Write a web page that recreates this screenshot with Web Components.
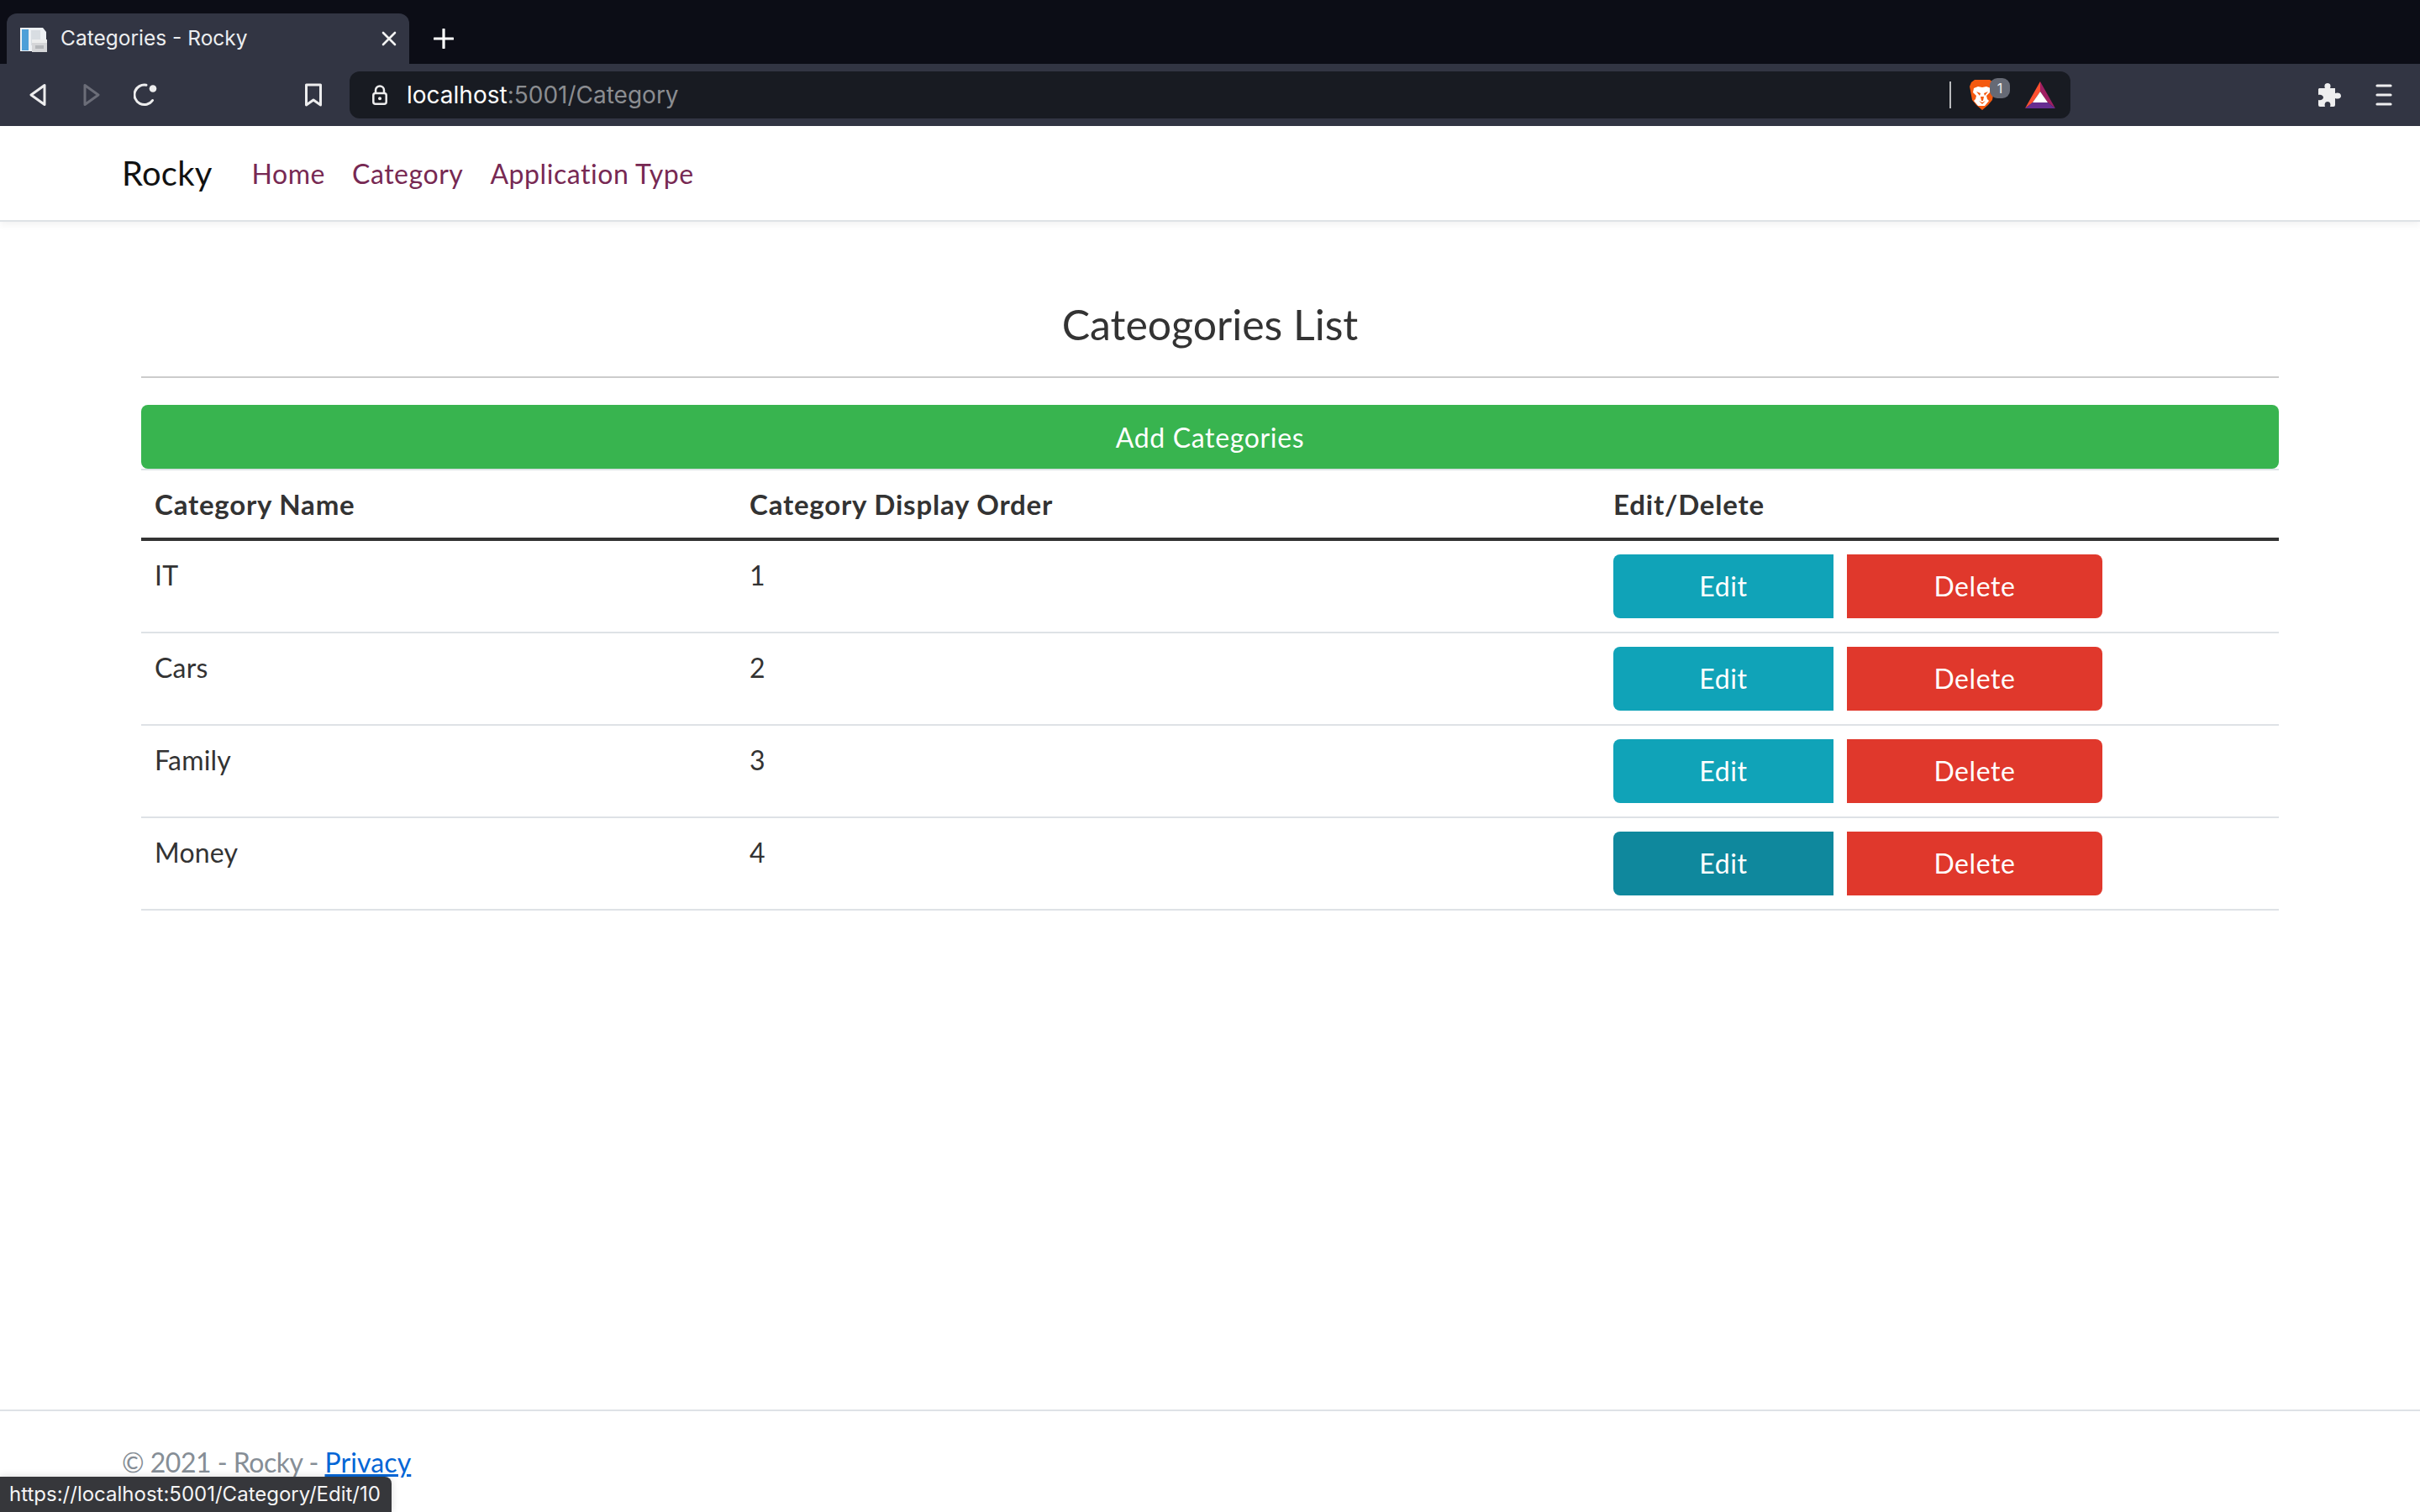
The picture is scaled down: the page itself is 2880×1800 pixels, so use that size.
<!DOCTYPE html>
<html lang="en"><head><meta charset="utf-8"><title>Categories - Rocky</title>
<style>
html,body{margin:0;padding:0;height:100%;background:#fff}
body{width:2880px;height:1800px;overflow:hidden;display:flex;flex-direction:column;position:relative;font-family:Lato,"Noto Sans",sans-serif;color:#333}
page-main{flex:1}
</style></head><body>
<browser-chrome></browser-chrome>
<site-nav></site-nav>
<page-main>
  <cat-row name="IT" order="1"></cat-row>
  <cat-row name="Cars" order="2"></cat-row>
  <cat-row name="Family" order="3"></cat-row>
  <cat-row name="Money" order="4" hover></cat-row>
</page-main>
<site-footer></site-footer>
<status-tip>https://localhost:5001/Category/Edit/10</status-tip>
<script>
function def(name,html,init){customElements.define(name,class extends HTMLElement{constructor(){super();const r=this.attachShadow({mode:'open'});r.innerHTML=typeof html==='function'?html(this):html;}connectedCallback(){if(init)init(this)}})}
const UI='Inter,"Liberation Sans",sans-serif';
def('browser-chrome',`<style>
:host{display:block;font-family:${UI}}
.strip{height:76px;background:#0c0d16;display:flex;align-items:flex-end;padding-left:8px;box-sizing:border-box}
.tab{width:479px;height:60px;background:#323543;border-radius:12px 12px 0 0;display:flex;align-items:center;box-sizing:border-box;padding:0 15px 0 16px;color:#eceef0;font-size:24.5px}
.tab svg.fav{margin-right:16px;margin-top:-1px}
.tab span{flex:1;margin-top:-2px}
.plus{margin-left:29px;margin-bottom:18px}
.bar{height:74px;background:#323543;display:flex;align-items:center;box-sizing:border-box;padding-left:35px}
.addr{width:2048px;height:56px;background:#181b22;border-radius:12px;display:flex;align-items:center;box-sizing:border-box;padding-left:27px;font-size:28px;color:#8b8d91;position:relative}
.addr b{font-weight:400;color:#fff}
.url{margin-left:23px;flex:1}
.div{width:2px;height:32px;background:#b9babd;margin-right:22px}
.lion{position:relative;width:48px;height:36px;margin-right:18px}
.badge{position:absolute;left:24px;top:-2px;width:24px;height:24px;border-radius:9px;background:#666a75;color:#eee;font-size:16px;display:flex;align-items:center;justify-content:center}
.bat{margin-right:18px}
</style>
<div class="strip"><div class="tab">
<svg class="fav" width="32" height="32" viewBox="0 0 32 32"><path d="M0 3h20l7 0 4 5v23H0z" fill="#eef1f4"/><rect x="2" y="5" width="8" height="25" fill="#4d9fd8"/><path d="M13 6h11v18H13z" fill="#d8dde2"/><rect x="14" y="17" width="18" height="15" fill="#d5d6d8"/><rect x="14" y="17" width="18" height="4" fill="#eceded"/><rect x="18" y="24" width="10" height="4" fill="#b4b6b9"/></svg>
<span>Categories - Rocky</span>
<svg width="18" height="18" viewBox="0 0 18 18"><path d="M2 2l14 14M16 2L2 16" stroke="#f2f2f2" stroke-width="2.6" stroke-linecap="round"/></svg>
</div>
<svg class="plus" width="24" height="24" viewBox="0 0 24 24"><path d="M12 1v22M1 12h22" stroke="#fff" stroke-width="3.2" stroke-linecap="round"/></svg>
</div>
<div class="bar">
<svg width="20" height="28" viewBox="0 0 20 28"><path d="M18 2.5v23L2 14z" fill="none" stroke="#ededee" stroke-width="3" stroke-linejoin="round"/></svg>
<svg style="margin-left:44px" width="20" height="28" viewBox="0 0 20 28"><path d="M2 2.5v23L18 14z" fill="none" stroke="#6b6d78" stroke-width="3" stroke-linejoin="round"/></svg>
<svg style="margin-left:40px" width="28" height="28" viewBox="0 0 28 28"><path d="M22.5 20.5A11.8 11.8 0 1 1 15 2.2" fill="none" stroke="#ededee" stroke-width="3" stroke-linecap="round"/><circle cx="23" cy="6.500" r="4.300" fill="#ededee"/></svg>
<svg style="margin-left:175px;margin-right:32px" width="22" height="28" viewBox="0 0 22 28"><path d="M2.500 2h17v24l-8.500-6-8.500 6z" fill="none" stroke="#ededee" stroke-width="3" stroke-linejoin="round"/></svg>
<div class="addr">
<svg width="18" height="24" viewBox="0 0 18 24"><path d="M4 10V6.500a5 5 0 0 1 10 0V10" fill="none" stroke="#ededee" stroke-width="2.500"/><rect x="1.300" y="10" width="15.400" height="12.700" rx="2.500" fill="none" stroke="#ededee" stroke-width="2.500"/><circle cx="9" cy="16.300" r="2" fill="#ededee"/></svg>
<span class="url"><b>localhost</b>:5001/Category</span>
<span class="div"></span>
<span class="lion"><svg width="30" height="36" viewBox="0 0 30 36"><path d="M6 0h18l4 3 2 5-1 5-2 11-5 6-7 6-7-6-5-6L1 13 0 8l2-5z" fill="#f4590f"/><path d="M5 10l5-2 5 1 5-1 5 2-1 5-4 4 1 4 2 2-5 6h-8l-5-6 2-2 1-4-4-4z" fill="#fff"/><path d="M8 14l5 2-1 3zM22 14l-5 2 1 3zM13 20h4l-1 5h-2zM11 25l4 2 4-2-4 4z" fill="#f4590f"/></svg><span class="badge">1</span></span>
<svg class="bat" width="36" height="32" viewBox="0 0 36 32"><path d="M18 0L0 32l9-7 9-13z" fill="#ff5031"/><path d="M18 0l18 32-9-7-9-13z" fill="#a01f63"/><path d="M0 32h36l-9-7H9z" fill="#662d91"/><path d="M18 12l9 13H9z" fill="#fff"/></svg>
</div>
<svg style="margin-left:294px" width="30" height="30" viewBox="0 0 30 30"><path d="M2 7h7c-1-2-1-6 3-6s4 4 3 6h6v6c2-1 7-1 7 3s-5 4-7 3v8a2 2 0 0 1-2 2h-4c1-3 0-6-3-6s-4 3-3 6H3a2 2 0 0 1-2-2v-6c3 1 6-1 6-3s-3-4-6-3V8z" fill="#eeeeef"/></svg>
<svg style="margin-left:39px" width="20" height="26" viewBox="0 0 20 26"><path d="M2 2h16M2 13h16M2 24h16" stroke="#eeeeef" stroke-width="3.200" stroke-linecap="round"/></svg>
</div>`);
def('site-nav',`<style>
:host{display:flex;align-items:center;height:114px;box-sizing:border-box;padding:0 145px 0;background:#fff;border-bottom:2px solid #dee2e6;box-shadow:0 4px 8px rgba(0,0,0,.05);position:relative;z-index:1;font-family:Lato,"Noto Sans",sans-serif}
.brand{font-size:40px;color:#111;margin-right:47px;letter-spacing:.2px}
a{font-size:32px;color:#772953;text-decoration:none;margin-right:32px;letter-spacing:.55px}
</style><span class="brand">Rocky</span><a>Home</a><a>Category</a><a>Application Type</a>`);
customElements.define('page-main',class extends HTMLElement{constructor(){super();this.attachShadow({mode:'open'}).innerHTML=`<style>
:host{display:block;padding:0 168px;font-family:Lato,"Noto Sans",sans-serif;color:#333}
h3{margin:0;box-sizing:border-box;padding-top:97px;text-align:center;font-weight:400;font-size:50px;line-height:50px;border-bottom:2px solid #ccc;height:186px}
.add{margin-top:32px;height:76px;background:#38b44f;color:#fff;border-radius:8px;display:flex;align-items:center;justify-content:center;font-size:32px;letter-spacing:.65px}
.head{display:grid;grid-template-columns:708px 1028px 808px;border-top:2px solid #dee2e6;border-bottom:4px solid #333;font-weight:700;font-size:33px;letter-spacing:.8px;box-sizing:content-box;height:80px}
.head div{padding:21px 16px 0;line-height:38px}
</style><h3>Cateogories List</h3><div class="add">Add Categories</div><div class="head"><div>Category Name</div><div>Category Display Order</div><div>Edit/Delete</div></div><slot></slot>`}});
def('cat-row',el=>`<style>
:host{display:grid;grid-template-columns:708px 1028px 808px;height:110px;box-sizing:border-box;border-bottom:2px solid #dee2e6;font-size:32px}
.c{padding:22px 16px 0;line-height:38px;letter-spacing:.2px}
.a{display:flex;padding:16px;align-items:flex-start}
.b{height:76px;color:#fff;display:flex;align-items:center;justify-content:center;letter-spacing:.6px;padding-bottom:1px;box-sizing:border-box}
.e{width:262px;background:${el.hasAttribute('hover')?'#0f889d':'#10a3b8'};border-radius:8px 0 0 8px;margin-right:16px}
.d{width:304px;background:#e0382c;border-radius:0 8px 8px 0}
</style><div class="c">${el.getAttribute('name')}</div><div class="c">${el.getAttribute('order')}</div><div class="a"><div class="b e">Edit</div><div class="b d">Delete</div></div>`);
def('site-footer',`<style>
:host{display:block;height:122px;box-sizing:border-box;border-top:2px solid #dee2e6;padding:42px 145px 0;font-size:32px;line-height:38px;color:#868e96;font-family:Lato,"Noto Sans",sans-serif;letter-spacing:-.5px}
a{color:#0366d6;text-decoration:underline;letter-spacing:.1px}
</style>© 2021 - Rocky - <a>Privacy</a>`);
def('status-tip',`<style>
:host{position:absolute;left:0;bottom:0;height:42px;width:466px;box-sizing:border-box;padding-left:11px;background:#36373b;color:#f4f4f5;border-radius:0 8px 0 0;font:24px/42px ${UI};box-shadow:0 0 10px rgba(0,0,0,.15);white-space:nowrap}
</style><slot></slot>`);
</script>
</body></html>
